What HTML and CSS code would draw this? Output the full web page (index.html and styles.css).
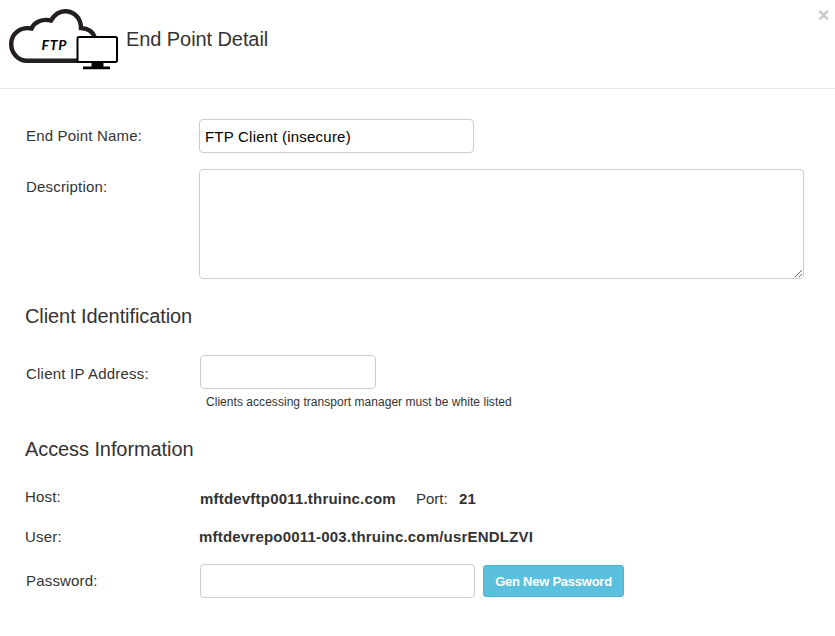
FILE: index.html
```html
<!DOCTYPE html>
<html lang="en">
<head>
    <meta charset="UTF-8">
    <title>End Point Detail</title>
    <link rel="stylesheet" href="styles.css">
</head>
<body>
    <div class="header">
        <svg class="logo" width="112" height="64" viewBox="0 0 112 64">
            <!-- cloud -->
            <path d="M70 52.800H19C10 52.800 3.200 45 3.200 36C3.200 26 12 18.500 23.500 20.500C26.500 14 34 10.500 43 12.500C47 6 52 3.300 57 3.300C66 3.300 73 10 73 20C80 20.500 85 24 87 29.500" fill="none" stroke="#231f20" stroke-width="4.400"/>
            <text class="logo-text" x="33.500" y="41.700">FTP</text>
            <!-- monitor -->
            <rect x="69.500" y="29" width="39.500" height="25" rx="1.500" fill="#fff" stroke="#000" stroke-width="2"/>
            <path d="M83.500 54.500h12v4h6.500v2.800h-27v-2.800h8.500z" fill="#000"/>
        </svg>
        <h4 class="title">End Point Detail</h4>
        <button class="close" type="button">&times;</button>
    </div>

    <div class="content">
        <div class="row">
            <label class="label" for="name">End Point Name:</label>
            <input class="input" id="name" type="text" value="FTP Client (insecure)">
        </div>
        <div class="row row-description">
            <label class="label label-top" for="description">Description:</label>
            <textarea class="input textarea" id="description"></textarea>
        </div>

        <h4 class="section">Client Identification</h4>
        <div class="row">
            <label class="label label-ip" for="ip">Client IP Address:</label>
            <input class="input input-ip" id="ip" type="text">
        </div>
        <div class="hint">Clients accessing transport manager must be white listed</div>

        <h4 class="section section-access">Access Information</h4>
        <div class="row row-host">
            <span class="label label-host">Host:</span>
            <b class="value host">mftdevftp0011.thruinc.com</b>
            <span class="port">Port:</span>
            <b class="value">21</b>
        </div>
        <div class="row row-user">
            <span class="label label-user">User:</span>
            <b class="value user">mftdevrepo0011-003.thruinc.com/usrENDLZVI</b>
        </div>
        <div class="row">
            <label class="label label-indent" for="password">Password:</label>
            <input class="input" id="password" type="text">
            <button class="button" type="button">Gen New Password</button>
        </div>
    </div>
</body>
</html>
```
FILE: styles.css
```css
* {
    box-sizing: border-box;
}

body {
    margin: 0;
    background: #fff;
    color: #333;
    font-family: "Liberation Sans", Arial, sans-serif;
    font-size: 15px;
    overflow: hidden;
}

.header {
    display: flex;
    height: 89px;
    padding: 8px 5px 0 8px;
    border-bottom: 1px solid #e5e5e5;
}

.logo-text {
    font-family: Lato, "Liberation Sans", sans-serif;
    font-size: 14px;
    font-weight: bold;
    font-style: italic;
    letter-spacing: 0.8px;
}

.title {
    margin: 19px 0 0 6px;
    font-size: 20px;
    font-weight: normal;
    line-height: 24px;
    letter-spacing: -0.08px;
}

.close {
    width: 13px;
    height: 14px;
    margin-left: auto;
    padding: 0;
    border: 0;
    background: none;
    color: #c8c8c8;
    font-family: "Liberation Sans", Arial, sans-serif;
    font-size: 20px;
    font-weight: bold;
    line-height: 12px;
}

.content {
    padding: 30px 0 0 26px;
}

.row {
    display: flex;
    align-items: center;
    height: 34px;
}

.row-description {
    align-items: flex-start;
    height: 110px;
    margin-top: 16px;
}

.label {
    width: 173px;
    padding-bottom: 2px;
    letter-spacing: 0.18px;
}

.label-top {
    padding: 9px 0 0;
}

.label-indent {
    width: 174px;
}

.label-ip {
    width: 174px;
    padding: 2px 0 0;
    letter-spacing: 0.22px;
}

.input {
    width: 275px;
    height: 34px;
    padding: 0 6px 0 5px;
    border: 1px solid #ccc;
    border-radius: 4px;
    background: #fff;
    color: #000;
    font-family: "Liberation Sans", Arial, sans-serif;
    font-size: 15px;
    letter-spacing: 0.21px;
}

.textarea {
    width: 605px;
    height: 110px;
}

.input-ip {
    width: 176px;
}

.section {
    height: 34px;
    margin: 20px 0 22px -1px;
    font-size: 20px;
    font-weight: normal;
    line-height: 34px;
    letter-spacing: -0.09px;
}

.hint {
    height: 26px;
    padding-left: 180px;
    font-size: 12px;
    line-height: 26px;
    letter-spacing: 0.04px;
}

.section-access {
    margin: 17px 0 14px -1px;
}

.row-host,
.row-user {
    margin-left: -1px;
}

.row-user {
    margin: 6px 0 10px -1px;
}

.label-host {
    width: 175px;
}

.label-user {
    width: 174px;
}

.value {
    letter-spacing: 0.2px;
}

.user {
    padding-bottom: 2px;
}

.row-host .value,
.port {
    padding-top: 2px;
}

.port {
    width: 43px;
    margin-left: 20px;
}

.button {
    width: 141px;
    height: 32px;
    margin-left: 8px;
    padding: 0;
    border: 1px solid #46b8da;
    border-radius: 3px;
    background: #5bc0de;
    color: #fff;
    font-family: "Liberation Sans", Arial, sans-serif;
    font-size: 13px;
    font-weight: bold;
    letter-spacing: -0.25px;
}
```
